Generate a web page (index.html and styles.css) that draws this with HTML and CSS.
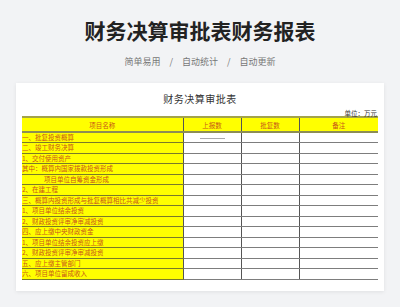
FILE: index.html
```html
<!DOCTYPE html>
<html lang="zh">
<head>
<meta charset="utf-8">
<link rel="stylesheet" href="styles.css">
</head>
<body>
<header class="hero">
  <h1 class="hero-title">财务决算审批表财务报表</h1>
  <p class="hero-tags"><span>简单易用</span><span class="sep">/</span><span>自动统计</span><span class="sep">/</span><span>自动更新</span></p>
</header>
<main class="card">
  <div class="sheet-title">财务决算审批表</div>
  <div class="unit">单位：万元</div>
  <table class="sheet">
    <colgroup><col class="c1"><col class="c2"><col class="c3"><col class="c4"></colgroup>
    <thead>
      <tr><th>项目名称</th><th>上报数</th><th>批复数</th><th>备注</th></tr>
    </thead>
    <tbody>
      <tr><td class="name">一、批复投资概算</td><td><span class="dash"></span></td><td></td><td></td></tr>
      <tr><td class="name">二、竣工财务决算</td><td></td><td></td><td></td></tr>
      <tr><td class="name">1、交付使用资产</td><td></td><td></td><td></td></tr>
      <tr><td class="name">其中：概算内国家拨款投资形成</td><td></td><td></td><td></td></tr>
      <tr><td class="name indent">项目单位自筹资金形成</td><td></td><td></td><td></td></tr>
      <tr><td class="name">2、在建工程</td><td></td><td></td><td></td></tr>
      <tr><td class="name">三、概算内投资形成与批复概算相比共减少投资</td><td></td><td></td><td></td></tr>
      <tr><td class="name">1、项目单位结余投资</td><td></td><td></td><td></td></tr>
      <tr><td class="name">2、财政投资评审净审减投资</td><td></td><td></td><td></td></tr>
      <tr><td class="name">四、应上缴中央财政资金</td><td></td><td></td><td></td></tr>
      <tr><td class="name">1、项目单位结余投资应上缴</td><td></td><td></td><td></td></tr>
      <tr><td class="name">2、财政投资评审净审减投资</td><td></td><td></td><td></td></tr>
      <tr><td class="name">五、应上缴主管部门</td><td></td><td></td><td></td></tr>
      <tr><td class="name">六、项目单位留成收入</td><td></td><td></td><td></td></tr>
    </tbody>
  </table>
</main>
</body>
</html>
```
FILE: styles.css
```css
html, body {
  margin: 0;
  padding: 0;
}
body {
  background: #f2f3f5;
  font-family: "Noto Sans CJK SC", "Noto Sans", sans-serif;
  width: 400px;
  height: 307px;
  overflow: hidden;
}
.hero {
  text-align: center;
  padding-top: 16px;
}
.hero-title {
  margin: 0;
  font-size: 21px;
  line-height: 28px;
  font-weight: 700;
  color: #222;
}
.hero-tags {
  margin: 12px 0 0;
  font-size: 9px;
  line-height: 12px;
  color: #777;
}
.hero-tags .sep {
  margin: 0 9px;
}
.card {
  display: block;
  margin: 15px 16px 0;
  padding: 10px 6px 11px;
  background: #fff;
  box-shadow: 0 1px 4px rgba(0, 0, 0, 0.08);
}
.sheet-title {
  text-align: center;
  font-size: 10px;
  line-height: 12px;
  color: #333;
  letter-spacing: 0.5px;
}
.unit {
  margin-top: 5px;
  text-align: right;
  font-size: 6.5px;
  line-height: 6px;
  height: 6px;
  color: #333;
  padding-right: 1px;
}
.sheet {
  width: 356px;
  border-collapse: collapse;
  table-layout: fixed;
}
.c1 { width: 161px; }
.c2 { width: 58px; }
.c3 { width: 58px; }
.c4 { width: 79px; }
.sheet th {
  background: #ffff00;
  height: 13px;
  padding: 0;
  font-size: 6.5px;
  font-weight: 400;
  color: #c8561a;
  border-top: 2px solid #a3a34a;
  border-bottom: 2px solid #8d8d55;
  border-left: 1px solid #555;
}
.sheet th:first-child { border-left: none; }
.sheet tbody tr { height: 10.5px; }
.sheet td {
  padding: 0;
  border-bottom: 1px solid #7d7d7d;
  border-left: 1px solid #555;
  font-size: 6.5px;
  line-height: 9px;
  text-align: center;
}
.sheet td.name {
  background: #ffff00;
  color: #c8561a;
  text-align: left;
  border-left: none;
  border-bottom-color: #7a7a2a;
  white-space: nowrap;
  overflow: hidden;
}
.sheet td.indent {
  padding-left: 22px;
}
.dash {
  display: inline-block;
  width: 25px;
  height: 0;
  border-top: 1px solid #aaa;
  vertical-align: middle;
}
```
